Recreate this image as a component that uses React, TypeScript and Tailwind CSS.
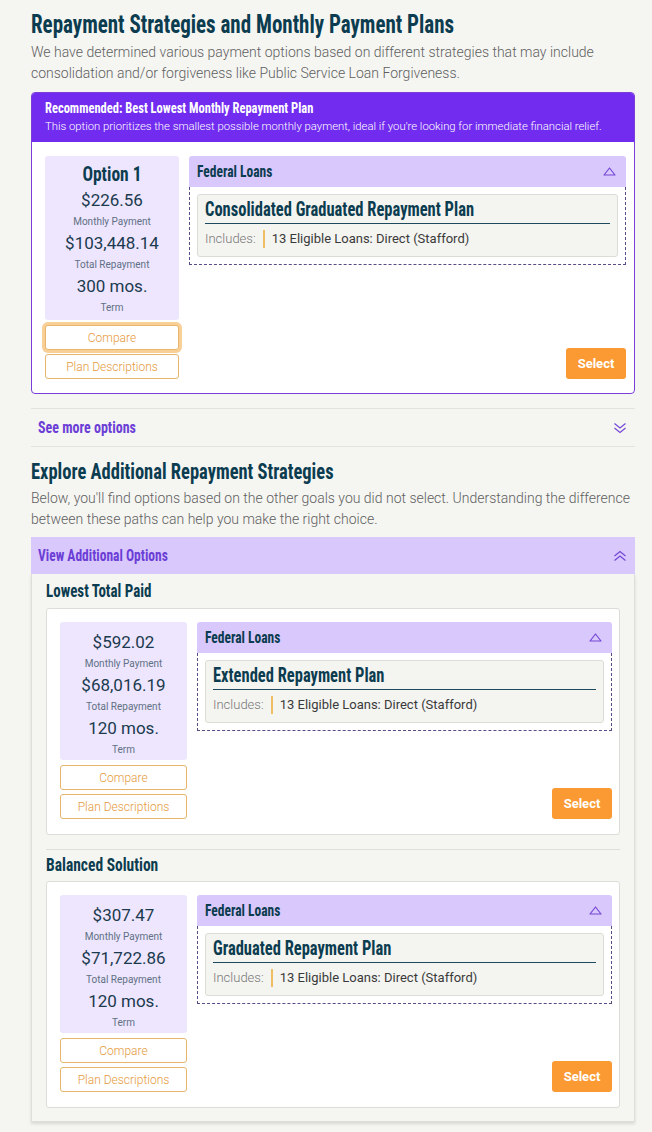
import React from "react";

const HF = "font-['Roboto',sans-serif] font-bold [font-stretch:75%]";

function TriUp() {
  return (
    <svg width="13" height="9" viewBox="0 0 13 9" className="shrink-0">
      <polygon points="6.5,1 12,8 1,8" fill="none" stroke="#7447d6" strokeWidth="1.2" strokeLinejoin="round" />
    </svg>
  );
}

function DoubleChevron({ up }: { up?: boolean }) {
  return (
    <svg width="14" height="12" viewBox="0 0 14 12" className="shrink-0" style={up ? { transform: "rotate(180deg)" } : undefined}>
      <polyline points="1.5,1.5 7,6 12.5,1.5" fill="none" stroke="#7447d6" strokeWidth="1.2" />
      <polyline points="1.5,6 7,10.5 12.5,6" fill="none" stroke="#7447d6" strokeWidth="1.2" />
    </svg>
  );
}

type Plan = {
  option?: string;
  monthly: string;
  total: string;
  term: string;
  planName: string;
  focused?: boolean;
  boxW: string;
};

function Stat({ value, label }: { value: string; label: string }) {
  return (
    <div className="flex flex-col items-center">
      <div className="text-[17px] leading-[26px] text-[#1b3a4e]">{value}</div>
      <div className="text-[10px] leading-[17px] text-[#617084]">{label}</div>
    </div>
  );
}

function PlanBody({ option, monthly, total, term, planName, focused, boxW }: Plan) {
  return (
    <div className="flex gap-[10px]">
      <div className={`flex shrink-0 flex-col ${boxW}`}>
        <div className={`flex flex-col items-center rounded-[3px] bg-[#ede6fe] ${option ? "pt-[5px] pb-[4px]" : "pt-[7px] pb-[2px]"}`}>
          {option && (
            <div className={`${HF} inline-block scale-y-[1.2] text-[17.5px] leading-[26px] text-[#0b3c4f]`}>{option}</div>
          )}
          <Stat value={monthly} label="Monthly Payment" />
          <Stat value={total} label="Total Repayment" />
          <Stat value={term} label="Term" />
        </div>
        <button
          className={`mt-[5px] h-[25px] rounded-[3px] border border-[#e6b66c] bg-white text-[12px] font-light text-[#e59a3d] ${
            focused ? "ring-[3px] ring-[#f9cf98]" : ""
          }`}
        >
          Compare
        </button>
        <button className="mt-[4px] h-[25px] rounded-[3px] border border-[#e6b66c] bg-white text-[12px] font-light text-[#e59a3d]">
          Plan Descriptions
        </button>
      </div>
      <div className="flex min-w-0 flex-1 flex-col justify-between">
        <div>
          <div className="flex h-[31px] items-center justify-between rounded-t-[3px] bg-[#d9c8fb] pl-[8px] pr-[10px]">
            <span className={`${HF} inline-block origin-left scale-y-[1.2] text-[13.5px] text-[#0b3c4f]`}>Federal Loans</span>
            <TriUp />
          </div>
          <div className="border border-t-0 border-dashed border-[#5a4a86] p-[7px]">
            <div className="rounded-[3px] border border-[#dcdcd7] bg-[#f4f4f1] px-[7px] pt-[4px] pb-[7px]">
              <div className="border-b border-[#1d4a5e] pb-[2px]">
                <div className={`${HF} origin-left scale-y-[1.2] text-[16.5px] leading-[22px] text-[#0b3c4f]`}>{planName}</div>
              </div>
              <div className="mt-[5px] flex h-[20px] items-center text-[13px]">
                <span className="font-light text-[#777]">Includes:</span>
                <span className="mx-[7px] h-[18px] w-[2px] bg-[#f0bd63]" />
                <span className="text-[#3a3a3a]">13 Eligible Loans: Direct (Stafford)</span>
              </div>
            </div>
          </div>
        </div>
        <button className="self-end h-[31px] w-[60px] rounded-[3px] bg-[#fb9a33] text-[13px] font-bold text-white">Select</button>
      </div>
    </div>
  );
}

export default function App() {
  return (
    <div className="min-h-[1132px] bg-[#f5f5f2] pl-[31px] pr-[17px] pt-[9px] pb-[8px] font-['Roboto',sans-serif]">
      <h1 className={`${HF} origin-left scale-y-[1.2] text-[21px] leading-[32px] text-[#0b3c4f]`}>
        Repayment Strategies and Monthly Payment Plans
      </h1>
      <p className="mt-[1px] text-[14px] font-light leading-[21px] text-[#5f5f5f]">
        We have determined various payment options based on different strategies that may include consolidation and/or
        forgiveness like Public Service Loan Forgiveness.
      </p>

      <div className="mt-[8px] overflow-hidden rounded-[4px] border border-[#7a3fd9] bg-white">
        <div className="bg-[#722cf0] px-[13px] pt-[6px] pb-[7px] text-white">
          <div className={`${HF} origin-left scale-y-[1.2] text-[12.5px] leading-[18px]`}>
            Recommended: Best Lowest Monthly Repayment Plan
          </div>
          <div className="mt-[2px] text-[11.3px] font-light leading-[16px]">
            This option prioritizes the smallest possible monthly payment, ideal if you're looking for immediate financial relief.
          </div>
        </div>
        <div className="pl-[13px] pr-[8px] pt-[14px] pb-[14px]">
          <PlanBody
            option="Option 1"
            monthly="$226.56"
            total="$103,448.14"
            term="300 mos."
            planName="Consolidated Graduated Repayment Plan"
            focused
            boxW="w-[134px]"
          />
        </div>
      </div>

      <div className="mt-[14px] flex h-[39px] items-center justify-between border-y border-[#e2e2de] pl-[7px] pr-[8px]">
        <span className={`${HF} inline-block origin-left scale-y-[1.2] text-[14px] text-[#6b3ed6]`}>See more options</span>
        <DoubleChevron />
      </div>

      <h2 className={`${HF} mt-[11px] origin-left scale-y-[1.2] text-[18.5px] leading-[28px] text-[#0b3c4f]`}>
        Explore Additional Repayment Strategies
      </h2>
      <p className="mt-[2px] text-[14px] font-light leading-[21px] text-[#5f5f5f]">
        Below, you'll find options based on the other goals you did not select. Understanding the difference between these
        paths can help you make the right choice.
      </p>

      <div className="mt-[7px] flex h-[37px] items-center justify-between bg-[#d9c8fb] pl-[7px] pr-[8px]">
        <span className={`${HF} inline-block origin-left scale-y-[1.2] text-[13.5px] text-[#6b3ed6]`}>View Additional Options</span>
        <DoubleChevron up />
      </div>
      <div className="border border-t-0 border-[#dededa] px-[14px] pt-[6px] pb-[13px] shadow-[0_2px_3px_rgba(0,0,0,0.12)]">
        <h3 className={`${HF} origin-left scale-y-[1.2] text-[15px] leading-[22px] text-[#0b3c4f]`}>Lowest Total Paid</h3>
        <div className="mt-[6px] rounded-[3px] border border-[#dcdcd8] bg-white pl-[13px] pr-[7px] pt-[13px] pb-[15px]">
          <PlanBody
            monthly="$592.02"
            total="$68,016.19"
            term="120 mos."
            planName="Extended Repayment Plan"
            boxW="w-[127px]"
          />
        </div>
        <div className="mt-[14px] border-t border-[#dededa]" />
        <h3 className={`${HF} mt-[4px] origin-left scale-y-[1.2] text-[15.5px] leading-[22px] text-[#0b3c4f]`}>Balanced Solution</h3>
        <div className="mt-[5px] rounded-[3px] border border-[#dcdcd8] bg-white pl-[13px] pr-[7px] pt-[13px] pb-[15px]">
          <PlanBody
            monthly="$307.47"
            total="$71,722.86"
            term="120 mos."
            planName="Graduated Repayment Plan"
            boxW="w-[127px]"
          />
        </div>
      </div>
    </div>
  );
}
